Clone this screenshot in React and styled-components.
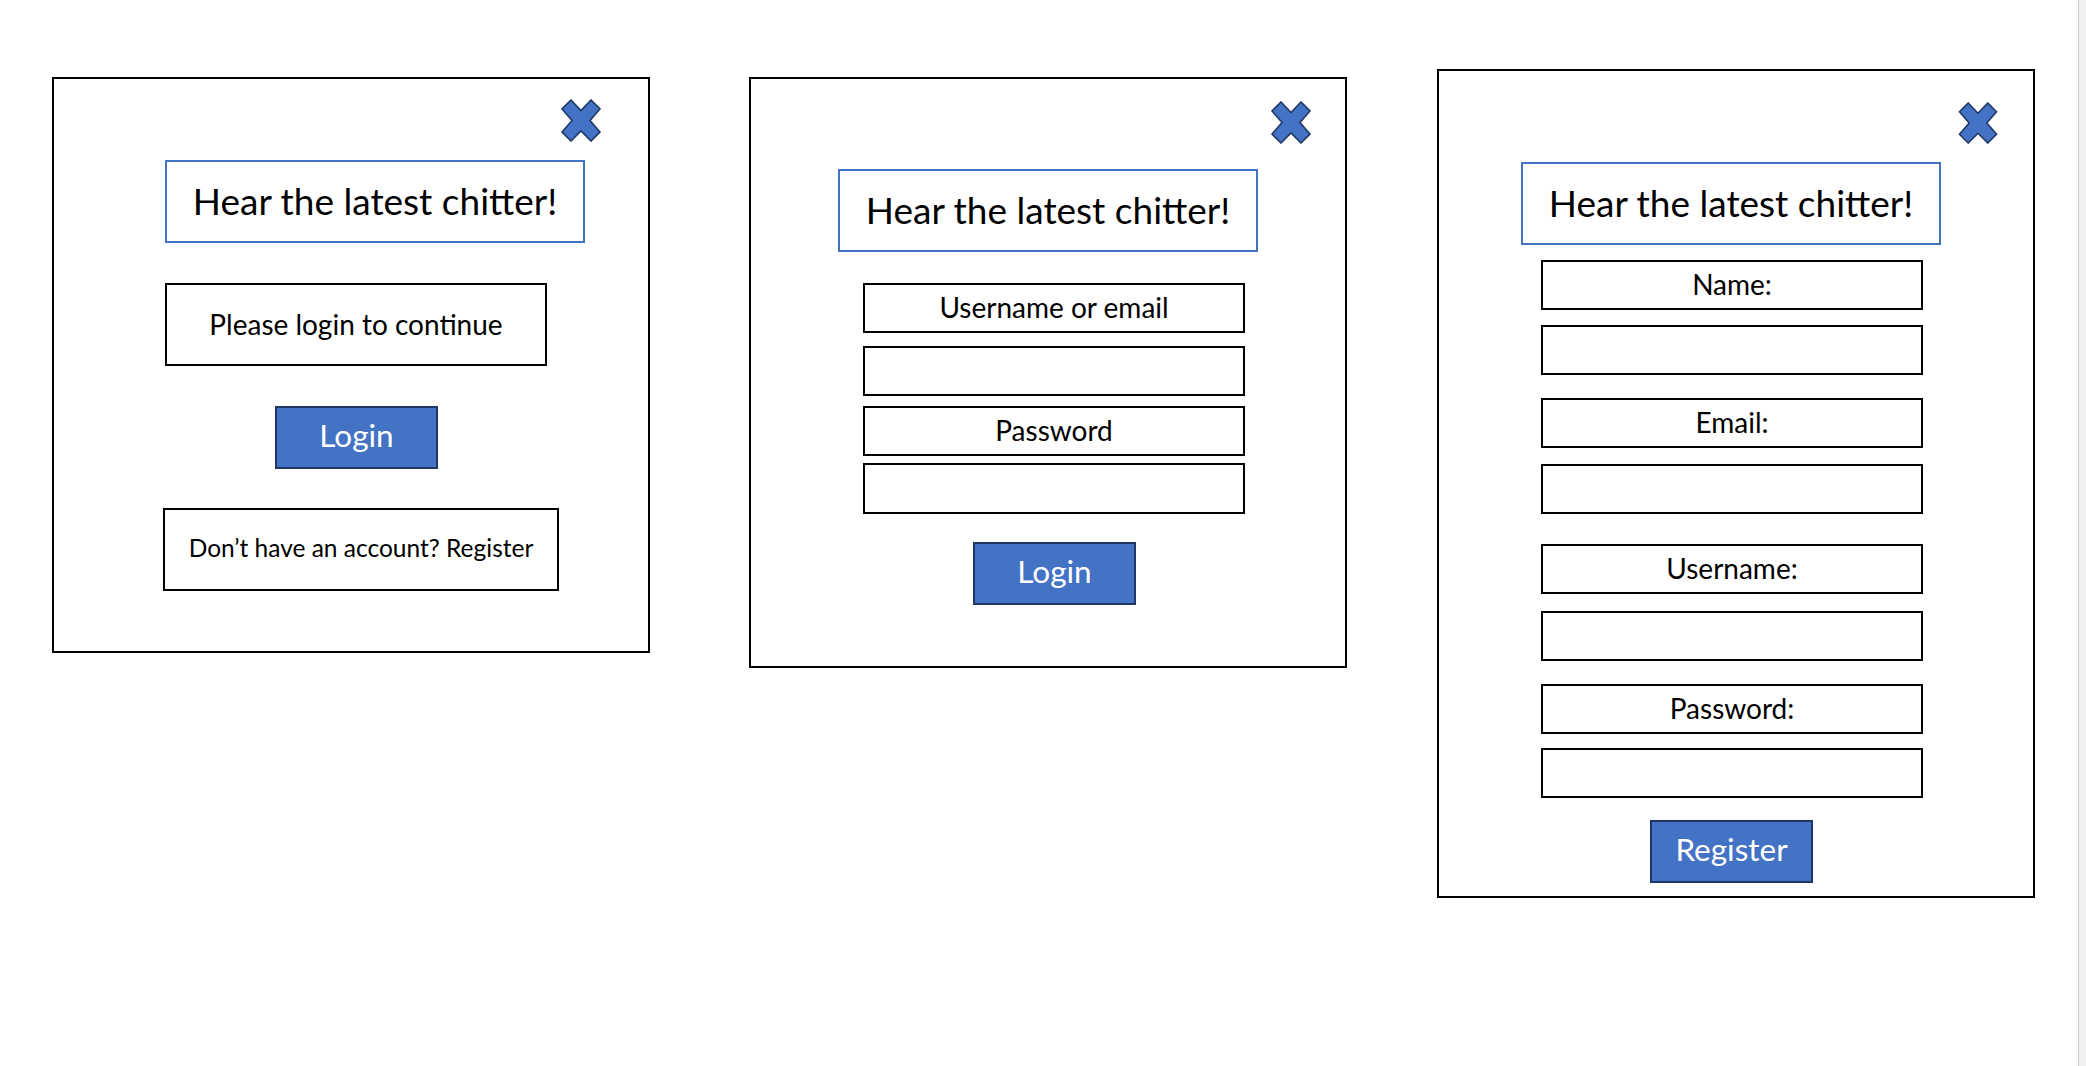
import React from "react";
import styled, { createGlobalStyle } from "styled-components";

const GlobalStyle = createGlobalStyle`
  *, *::before, *::after { box-sizing: border-box; }
  html, body { margin: 0; padding: 0; background: #ffffff; }
  body { font-family: Lato, "Open Sans", "Liberation Sans", sans-serif; color: #000; }
`;

const BLUE = "#4472c4";
const NAVY = "#1f3864";

const Page = styled.div`
  display: flex;
  width: 2086px;
  height: 1066px;
  overflow: hidden;
`;

const Canvas = styled.main`
  flex: 1;
  display: flex;
  align-items: flex-start;
  padding-left: 52px;
  background: #ffffff;
`;

const Scrollbar = styled.div`
  width: 8px;
  height: 100%;
  border-left: 1px solid #cdcdcd;
  background: #f0f0f0;
`;

const Panel = styled.section`
  display: flex;
  flex-direction: column;
  align-items: flex-start;
  flex-shrink: 0;
  width: 598px;
  height: ${(p) => p.$h}px;
  margin-top: ${(p) => p.$mt}px;
  margin-left: ${(p) => p.$ml || 0}px;
  border: 2px solid #000;
  background: #fff;
`;

const CloseButton = styled.button`
  align-self: flex-end;
  display: block;
  width: 40px;
  height: ${(p) => p.$h || 43}px;
  margin-top: ${(p) => p.$mt}px;
  margin-right: ${(p) => p.$mr}px;
  padding: 0;
  border: none;
  background: transparent;
  cursor: pointer;
  svg { display: block; width: 100%; height: 100%; }
`;

const TitleBox = styled.h1`
  display: flex;
  align-items: center;
  justify-content: center;
  width: 420px;
  height: 83px;
  margin: ${(p) => p.$mt}px 0 0 ${(p) => p.$ml}px;
  border: 2px solid ${BLUE};
  font-size: 37px;
  font-weight: 400;
  line-height: 1;
  padding-bottom: 2px;
  white-space: nowrap;
`;

const TextBox = styled.div`
  display: flex;
  align-items: center;
  justify-content: center;
  width: ${(p) => p.$w}px;
  height: 83px;
  margin: ${(p) => p.$mt}px 0 0 ${(p) => p.$ml}px;
  border: 2px solid #000;
  font-size: ${(p) => p.$size}px;
  line-height: 1;
  padding-bottom: 2px;
  white-space: nowrap;
`;

const FieldLabel = styled.label`
  display: flex;
  align-items: center;
  justify-content: center;
  width: 382px;
  height: 50px;
  margin: ${(p) => p.$mt}px 0 0 ${(p) => p.$ml}px;
  border: 2px solid #000;
  font-size: 28px;
  line-height: 1;
  padding-bottom: 3px;
  white-space: nowrap;
`;

const FieldInput = styled.input`
  display: block;
  width: 382px;
  height: ${(p) => p.$h || 50}px;
  margin: ${(p) => p.$mt}px 0 0 ${(p) => p.$ml}px;
  padding: 0 10px;
  border: 2px solid #000;
  border-radius: 0;
  background: #fff;
  font-family: inherit;
  font-size: 24px;
  outline: none;
`;

const PrimaryButton = styled.button`
  display: flex;
  align-items: center;
  justify-content: center;
  width: 163px;
  height: 63px;
  margin: ${(p) => p.$mt}px 0 0 ${(p) => p.$ml}px;
  padding: 0 0 3px;
  border: 2px solid ${NAVY};
  border-radius: 0;
  background: ${BLUE};
  color: #fff;
  font-family: inherit;
  font-size: 31.5px;
  line-height: 1;
  cursor: pointer;
`;

const CloseIcon = () => (
  <svg viewBox="0 0 40 43" aria-hidden="true">
    <polygon
      points="10,1 20,11.5 30,1 39,10 29,21.5 39,33 30,42 20,32 10,42 1,33 11,21.5 1,10"
      fill={BLUE}
      stroke="#203864"
      strokeWidth="1.6"
      strokeLinejoin="miter"
    />
  </svg>
);

export default function App() {
  return (
    <>
      <GlobalStyle />
      <Page>
        <Canvas>
          <Panel $h={576} $mt={77}>
            <CloseButton $mt={20} $mr={47} aria-label="Close">
              <CloseIcon />
            </CloseButton>
            <TitleBox $mt={18} $ml={111}>Hear the latest chitter!</TitleBox>
            <TextBox $mt={40} $ml={111} $w={382} $size={28}>
              Please login to continue
            </TextBox>
            <PrimaryButton $mt={40} $ml={221}>Login</PrimaryButton>
            <TextBox $mt={39} $ml={109} $w={396} $size={24.5}>
              Don’t have an account? Register
            </TextBox>
          </Panel>

          <Panel $h={591} $mt={77} $ml={99}>
            <CloseButton $mt={22} $mr={34} aria-label="Close">
              <CloseIcon />
            </CloseButton>
            <TitleBox $mt={25} $ml={87}>Hear the latest chitter!</TitleBox>
            <FieldLabel $mt={31} $ml={112}>Username or email</FieldLabel>
            <FieldInput $mt={13} $ml={112} />
            <FieldLabel $mt={10} $ml={112}>Password</FieldLabel>
            <FieldInput $mt={7} $ml={112} $h={51} type="password" />
            <PrimaryButton $mt={28} $ml={222}>Login</PrimaryButton>
          </Panel>

          <Panel $h={829} $mt={69} $ml={90}>
            <CloseButton $mt={31} $mr={35} $h={42} aria-label="Close">
              <CloseIcon />
            </CloseButton>
            <TitleBox $mt={18} $ml={82}>Hear the latest chitter!</TitleBox>
            <FieldLabel $mt={15} $ml={102}>Name:</FieldLabel>
            <FieldInput $mt={15} $ml={102} />
            <FieldLabel $mt={23} $ml={102}>Email:</FieldLabel>
            <FieldInput $mt={16} $ml={102} />
            <FieldLabel $mt={30} $ml={102}>Username:</FieldLabel>
            <FieldInput $mt={17} $ml={102} />
            <FieldLabel $mt={23} $ml={102}>Password:</FieldLabel>
            <FieldInput $mt={14} $ml={102} type="password" />
            <PrimaryButton $mt={22} $ml={211}>Register</PrimaryButton>
          </Panel>
        </Canvas>
        <Scrollbar />
      </Page>
    </>
  );
}
